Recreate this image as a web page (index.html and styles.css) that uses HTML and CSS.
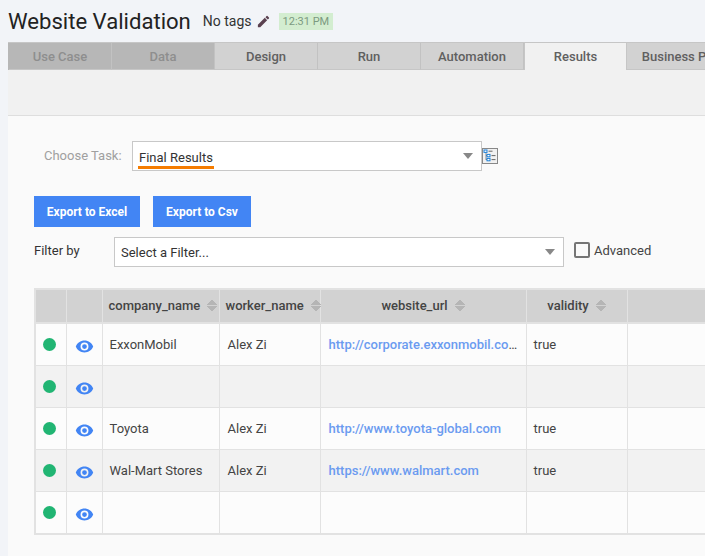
FILE: index.html
```html
<!DOCTYPE html>
<html lang="en">
  <head>
    <meta charset="UTF-8" />
    <title>Website Validation</title>
    <link rel="stylesheet" href="styles.css">
  </head>
  <body>
    <!-- Title -->
    <header class="title-bar">
      <h1>Website Validation</h1>
      <span class="tags">No tags</span>
      <svg class="pencil" viewBox="0 0 24 24" width="15" height="15"><path d="M3 17.25V21h3.75L17.81 9.94l-3.75-3.75L3 17.25zM20.71 7.04a1 1 0 0 0 0-1.41l-2.34-2.34a1 1 0 0 0-1.41 0l-1.83 1.83 3.75 3.75 1.83-1.83z"/></svg>
      <span class="time">12:31 PM</span>
    </header>

    <div class="content">
      <!-- Tabs -->
      <ul class="tabs">
        <li class="tab disabled">Use Case</li>
        <li class="tab disabled">Data</li>
        <li class="tab">Design</li>
        <li class="tab">Run</li>
        <li class="tab">Automation</li>
        <li class="tab active">Results</li>
        <li class="tab tab-wide">Business Process</li>
      </ul>
      <div class="subbar"></div>

      <section class="panel">
        <!-- Task -->
        <div class="task-row">
          <label class="task-label">Choose Task:</label>
          <div class="select task-select">
            <span class="task-value">Final Results</span>
            <span class="caret"></span>
          </div>
          <svg class="tree-icon" viewBox="0 0 16 16" width="16" height="16">
            <rect x="0.5" y="0.5" width="15" height="15" fill="#f1f1f1" stroke="#888"/>
            <path d="M4 4v8M4 7.5h2M4 11.5h2" stroke="#666" stroke-width="0.7" fill="none"/>
            <rect x="2" y="2" width="3" height="2.4" fill="#fff" stroke="#1a7fd8"/>
            <rect x="5" y="6.4" width="3" height="2.4" fill="#fff" stroke="#1a7fd8"/>
            <rect x="5" y="10.4" width="3" height="2.4" fill="#fff" stroke="#1a7fd8"/>
            <path d="M6.5 3.2h4M9.5 7.6h4M9.5 11.6h4" stroke="#666" fill="none"/>
          </svg>
        </div>

        <!-- Export -->
        <div class="export-row">
          <button class="export-btn btn-excel">Export to Excel</button>
          <button class="export-btn btn-csv">Export to Csv</button>
        </div>

        <!-- Filter -->
        <div class="filter-row">
          <label class="filter-label">Filter by</label>
          <div class="select filter-select">
            <span>Select a Filter...</span>
            <span class="caret"></span>
          </div>
          <span class="checkbox"></span>
          <span class="advanced">Advanced</span>
        </div>

        <!-- Results table -->
        <table class="results">
          <colgroup>
            <col class="col-status" />
            <col class="col-view" />
            <col class="col-company" />
            <col class="col-worker" />
            <col class="col-url" />
            <col class="col-validity" />
            <col class="col-rest" />
          </colgroup>
          <thead>
            <tr>
              <th></th>
              <th></th>
              <th><span class="th-left">company_name<span class="sort"></span></span></th>
              <th><span class="th-left">worker_name<span class="sort"></span></span></th>
              <th>website_url<span class="sort"></span></th>
              <th>validity<span class="sort"></span></th>
              <th></th>
            </tr>
          </thead>
          <tbody>
            <tr>
              <td><span class="dot"></span></td>
              <td><svg class="eye" viewBox="0 0 24 24" width="19" height="19"><path d="M12 4.5C7 4.5 2.73 7.61 1 12c1.73 4.39 6 7.5 11 7.5s9.27-3.11 11-7.5c-1.73-4.39-6-7.5-11-7.5zM12 17a5 5 0 1 1 0-10 5 5 0 0 1 0 10zm0-8a3 3 0 1 0 0 6 3 3 0 0 0 0-6z"/></svg></td>
              <td>ExxonMobil</td>
              <td>Alex Zi</td>
              <td class="cell-url"><a href="#">http://corporate.exxonmobil.com</a></td>
              <td>true</td>
              <td></td>
            </tr>
            <tr>
              <td><span class="dot"></span></td>
              <td><svg class="eye" viewBox="0 0 24 24" width="19" height="19"><path d="M12 4.5C7 4.5 2.73 7.61 1 12c1.73 4.39 6 7.5 11 7.5s9.27-3.11 11-7.5c-1.73-4.39-6-7.5-11-7.5zM12 17a5 5 0 1 1 0-10 5 5 0 0 1 0 10zm0-8a3 3 0 1 0 0 6 3 3 0 0 0 0-6z"/></svg></td>
              <td></td>
              <td></td>
              <td></td>
              <td></td>
              <td></td>
            </tr>
            <tr>
              <td><span class="dot"></span></td>
              <td><svg class="eye" viewBox="0 0 24 24" width="19" height="19"><path d="M12 4.5C7 4.5 2.73 7.61 1 12c1.73 4.39 6 7.5 11 7.5s9.27-3.11 11-7.5c-1.73-4.39-6-7.5-11-7.5zM12 17a5 5 0 1 1 0-10 5 5 0 0 1 0 10zm0-8a3 3 0 1 0 0 6 3 3 0 0 0 0-6z"/></svg></td>
              <td>Toyota</td>
              <td>Alex Zi</td>
              <td class="cell-url"><a href="#">http://www.toyota-global.com</a></td>
              <td>true</td>
              <td></td>
            </tr>
            <tr>
              <td><span class="dot"></span></td>
              <td><svg class="eye" viewBox="0 0 24 24" width="19" height="19"><path d="M12 4.5C7 4.5 2.73 7.61 1 12c1.73 4.39 6 7.5 11 7.5s9.27-3.11 11-7.5c-1.73-4.39-6-7.5-11-7.5zM12 17a5 5 0 1 1 0-10 5 5 0 0 1 0 10zm0-8a3 3 0 1 0 0 6 3 3 0 0 0 0-6z"/></svg></td>
              <td>Wal-Mart Stores</td>
              <td>Alex Zi</td>
              <td class="cell-url"><a href="#">https://www.walmart.com</a></td>
              <td>true</td>
              <td></td>
            </tr>
            <tr>
              <td><span class="dot"></span></td>
              <td><svg class="eye" viewBox="0 0 24 24" width="19" height="19"><path d="M12 4.5C7 4.5 2.73 7.61 1 12c1.73 4.39 6 7.5 11 7.5s9.27-3.11 11-7.5c-1.73-4.39-6-7.5-11-7.5zM12 17a5 5 0 1 1 0-10 5 5 0 0 1 0 10zm0-8a3 3 0 1 0 0 6 3 3 0 0 0 0-6z"/></svg></td>
              <td></td>
              <td></td>
              <td></td>
              <td></td>
              <td></td>
            </tr>
          </tbody>
        </table>
      </section>
    </div>
  </body>
</html>
```

FILE: styles.css
```css
html,
body {
  height: 100%;
}
body {
  font-family: Roboto, sans-serif;
  font-size: 13px;
  color: #333;
  margin: 0;
  padding: 0;
  background-color: #f2f4f8;
  overflow: hidden;
}
/* Title */
.title-bar {
  display: flex;
  align-items: center;
  height: 42px;
  padding-left: 8px;
  padding-top: 0;
  box-sizing: border-box;
}
.title-bar h1 {
  font-size: 22.1px;
  font-weight: 400;
  margin: 0 12px 0 0;
  color: #222;
}
.tags {
  font-size: 14px;
  color: #333;
}
.pencil {
  fill: #5b4150;
  margin-left: 4px;
}
.time {
  background: #d3edd0;
  color: #7c9a80;
  font-size: 11px;
  line-height: 17px;
  padding: 0 4px;
  margin-left: 8px;
}
/* Tabs */
.content {
  margin-left: 8px;
}
.tabs {
  display: flex;
  list-style: none;
  margin: 0;
  padding: 0 0 0 1px;
  height: 28px;
  box-sizing: border-box;
  width: 800px;
  border-top: 1px solid #c6c6c6;
  background: #b7b7b7;
}
.tab {
  width: 103px;
  flex: none;
  text-align: center;
  font-size: 13px;
  font-weight: 500;
  line-height: 27px;
  color: #606060;
  background: #d2d2d2;
  border-right: 1px solid #c2c2c2;
  border-bottom: 1px solid #c6c6c6;
  box-sizing: border-box;
  white-space: nowrap;
}
.tab.disabled {
  background: #b7b7b7;
  color: #8e8e8e;
}
.tab.active {
  background: #f1f1f1;
  border-bottom: none;
  border-left: 1px solid #c6c6c6;
  border-right: 1px solid #c6c6c6;
}
.tab-wide {
  width: 134px;
}
.subbar {
  height: 45px;
  background: #f1f1f1;
  border-bottom: 1px solid #dedede;
}
/* Panel */
.panel {
  background: #fafafa;
  padding: 25px 0 0 26px;
  height: 440px;
  box-sizing: border-box;
}
.task-row {
  display: flex;
  align-items: center;
  height: 30px;
}
.task-label {
  width: 88px;
  padding-left: 10px;
  flex: none;
  box-sizing: border-box;
  color: #a0a0a0;
  font-size: 13px;
  margin-top: -2px;
}
.select {
  position: relative;
  display: flex;
  align-items: center;
  height: 30px;
  box-sizing: border-box;
  background: #fff;
  border: 1px solid #c8c8c8;
  padding-left: 6px;
  font-size: 13px;
  color: #333;
}
.task-select {
  width: 350px;
  margin-left: 10px;
}
.task-value {
  padding-bottom: 0;
  position: relative;
  top: 1px;
}
.task-value::after {
  content: "";
  position: absolute;
  left: -1px;
  right: -1px;
  bottom: -4px;
  height: 3px;
  background: #f57c00;
}
.caret {
  position: absolute;
  right: 8px;
  top: 11px;
  border-left: 5px solid transparent;
  border-right: 5px solid transparent;
  border-top: 6px solid #888;
}
.tree-icon {
  margin-left: 0;
}
.export-row {
  display: flex;
  gap: 13px;
  margin-top: 25px;
}
.export-btn {
  background: #4285f4;
  color: #fff;
  border: none;
  height: 31px;
  padding: 0;
  font-family: Roboto, sans-serif;
  font-size: 12px;
  font-weight: 700;
}
.btn-excel {
  width: 106px;
}
.btn-csv {
  width: 98px;
}
.filter-row {
  display: flex;
  align-items: center;
  margin-top: 10px;
  height: 30px;
}
.filter-label {
  width: 80px;
  flex: none;
  font-size: 13px;
  color: #333;
  margin-top: -4px;
}
.filter-select {
  width: 450px;
}
.checkbox {
  width: 12px;
  height: 12px;
  border: 2px solid #757575;
  border-radius: 2px;
  margin-left: 10px;
  margin-top: -4px;
}
.advanced {
  margin-left: 4px;
  color: #444;
  margin-top: -4px;
}
/* Results table */
.results {
  border-collapse: collapse;
  table-layout: fixed;
  width: 780px;
  margin-top: 21px;
  border: 2px solid #e2e2e2;
  font-size: 13px;
}
.col-status {
  width: 31px;
}
.col-view {
  width: 36px;
}
.col-company {
  width: 117px;
}
.col-worker {
  width: 101px;
}
.col-url {
  width: 206px;
}
.col-validity {
  width: 101px;
}
.results th {
  height: 30px;
  background: #d2d2d2;
  font-weight: 500;
  font-size: 13px;
  color: #444;
  text-align: center;
  border-left: 1px solid #e2e2e2;
  border-right: 1px solid #e2e2e2;
  border-bottom: 2px solid #e2e2e2;
  padding: 0 0 2px;
  white-space: nowrap;
}
.th-left {
  display: block;
  text-align: left;
  padding-left: 6px;
}
.sort {
  display: inline-block;
  width: 10px;
  height: 13px;
  margin-left: 7px;
  vertical-align: -2px;
  background:
    linear-gradient(to bottom right, transparent 50%, #b5b5b5 50%) 0 0 / 5px 6px no-repeat,
    linear-gradient(to bottom left, transparent 50%, #b5b5b5 50%) 5px 0 / 5px 6px no-repeat,
    linear-gradient(to top right, transparent 50%, #b5b5b5 50%) 0 7px / 5px 6px no-repeat,
    linear-gradient(to top left, transparent 50%, #b5b5b5 50%) 5px 7px / 5px 6px no-repeat;
}
.results td {
  height: 41px;
  padding: 0 7px;
  border: 1px solid #e2e2e2;
  background: #fcfcfc;
  color: #444;
  white-space: nowrap;
  overflow: hidden;
  text-overflow: ellipsis;
  box-sizing: content-box;
}
.results tbody tr:nth-child(even) td {
  background: #f2f2f2;
}
.results td:nth-child(1),
.results td:nth-child(2) {
  padding: 0;
  text-align: center;
}
.results td:nth-child(4),
.results td:nth-child(5) {
  padding-left: 8px;
  padding-right: 6px;
}
.cell-url a {
  color: #6b9bf0;
  font-weight: 500;
  text-decoration: none;
}
.dot {
  display: block;
  width: 13px;
  height: 13px;
  border-radius: 50%;
  background: #21b573;
  margin: -1px 0 0 7px;
}
.eye {
  display: block;
  fill: #4285f4;
  margin: 3px auto 0;
}
```
